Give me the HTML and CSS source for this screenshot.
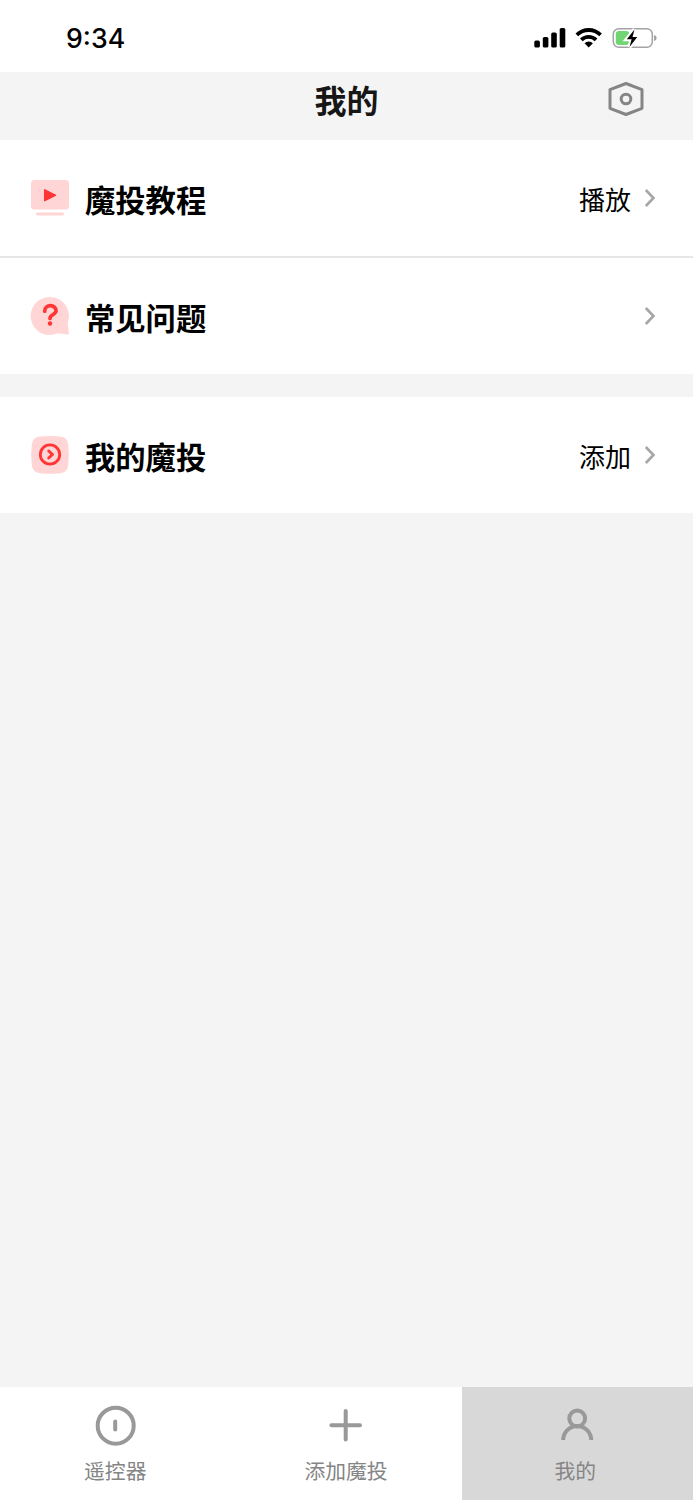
FILE: index.html
```html
<!DOCTYPE html>
<html lang="zh-CN">
<head>
<meta charset="utf-8">
<title>我的</title>
<link rel="stylesheet" href="styles.css">
</head>
<body>
<div class="app">
  <div class="status">
    <span class="time">9:34</span>
    <svg class="status-icons" width="126" height="24" viewBox="0 0 126 24">
      <rect x="0.300" y="14.500" width="5.600" height="7" rx="1.600"/>
      <rect x="8.800" y="11" width="5.600" height="10.500" rx="1.600"/>
      <rect x="17.200" y="6.500" width="5.600" height="15" rx="1.600"/>
      <rect x="25.700" y="2" width="5.600" height="19.500" rx="1.600"/>
      <path d="M41.500 7.400A19 19 0 0 1 67.900 7.400L65.300 10.200A15.300 15.300 0 0 0 44.100 10.200Z"/>
      <path d="M46 12.400A12.500 12.500 0 0 1 63.400 12.400L60.700 15.200A8.800 8.800 0 0 0 48.700 15.200Z"/>
      <path d="M50.500 17.200A6 6 0 0 1 58.900 17.200L54.700 21.500Z"/>
      <rect x="79.300" y="2.700" width="39" height="18.600" rx="5.500" fill="#fff" stroke="#a3a3a3" stroke-width="1.500"/>
      <rect x="81.800" y="5.100" width="13.500" height="13.800" rx="3.200" fill="#70d674"/>
      <path d="M120 9Q122.700 9.700 122.700 12T120 15Z" fill="#a3a3a3"/>
      <path d="M100.500 3.500L92.800 13.200H97.600L95.500 21L103.300 11H98.500Z" stroke="#fff" stroke-width="4"/>
      <path d="M100.500 3.500L92.800 13.200H97.600L95.500 21L103.300 11H98.500Z"/>
    </svg>
  </div>
  <header class="header">
    <h1 class="title">我的</h1>
    <svg class="settings" width="40" height="40" viewBox="0 0 40 40" fill="none" stroke="#858585" stroke-width="3">
      <path d="M20 4.500L36 10.700V29.300L20 35.500L4 29.300V10.700Z" stroke-linejoin="round"/>
      <circle cx="20" cy="20" r="4.800"/>
    </svg>
  </header>
  <main class="content">
    <section class="group">
      <div class="row">
        <svg class="icon" width="40" height="40" viewBox="0 0 40 40">
          <rect x="1" y="2" width="38" height="29.500" rx="3.500" fill="#ffd5d5"/>
          <rect x="6" y="34.500" width="28" height="3" rx="1.500" fill="#ffd5d5"/>
          <path d="M14.500 11.500L26 17.300L14.500 23Z" fill="#ff3434" stroke="#ff3434" stroke-width="1" stroke-linejoin="round"/>
        </svg>
        <span class="label">魔投教程</span>
        <span class="value">播放</span>
        <svg class="chevron" width="14" height="22" viewBox="0 0 14 22"><path d="M2.800 3L10.500 11L2.800 19"/></svg>
      </div>
      <div class="row divided">
        <svg class="icon" width="40" height="40" viewBox="0 0 40 40">
          <path d="M20 1A19 19 0 1 0 27.500 37.300L39 38.500L37.600 27A19 19 0 0 0 20 1Z" fill="#ffd5d5"/>
          <path d="M14.700 15.200C14.700 7.800 26 8 26 14.800C26 18.700 20 18.300 20 22.500" fill="none" stroke="#ff3434" stroke-width="3.700" stroke-linecap="round"/>
          <circle cx="20" cy="27.500" r="2.200" fill="#ff3434"/>
        </svg>
        <span class="label">常见问题</span>
        <svg class="chevron" width="14" height="22" viewBox="0 0 14 22"><path d="M2.800 3L10.500 11L2.800 19"/></svg>
      </div>
    </section>
    <section class="group">
      <div class="row">
        <svg class="icon" width="40" height="40" viewBox="0 0 40 40">
          <path d="M10 1.500Q20 .5 30 1.500Q37.500 2 38.200 9.500Q39.500 20 38.200 30Q37.500 37.500 30 38.200Q20 39.500 10 38.200Q2.500 37.500 1.800 30Q.5 20 1.800 9.500Q2.500 2 10 1.500Z" fill="#ffd5d5"/>
          <circle cx="20" cy="19.500" r="9.700" fill="none" stroke="#ff3434" stroke-width="2.800"/>
          <path d="M18.700 16L22.500 19.500L18.700 23" fill="none" stroke="#ff3434" stroke-width="2.900" stroke-linecap="round" stroke-linejoin="round"/>
        </svg>
        <span class="label">我的魔投</span>
        <span class="value">添加</span>
        <svg class="chevron" width="14" height="22" viewBox="0 0 14 22"><path d="M2.800 3L10.500 11L2.800 19"/></svg>
      </div>
    </section>
  </main>
  <nav class="tabs">
    <div class="tab">
      <svg width="42" height="42" viewBox="0 0 42 42"><circle cx="21.700" cy="20.700" r="18"/><path d="M21.200 16.500V24.500"/></svg>
      <span>遥控器</span>
    </div>
    <div class="tab">
      <svg width="42" height="42" viewBox="0 0 42 42"><path d="M20.700 6V34.500M6.400 20.200H35"/></svg>
      <span>添加魔投</span>
    </div>
    <div class="tab active">
      <svg width="42" height="42" viewBox="0 0 42 42"><circle cx="21.200" cy="13.500" r="7.900"/><path class="shoulders" d="M7.200 35A14 14 0 0 1 35.200 35"/></svg>
      <span>我的</span>
    </div>
  </nav>
</div>
</body>
</html>
```
FILE: styles.css
```css
* { box-sizing: border-box; }
body {
  margin: 0;
  font-family: "Noto Sans CJK SC", sans-serif;
  color: #000;
}
.app {
  display: flex;
  flex-direction: column;
  height: 1500px;
  background: #f4f4f4;
}
.status {
  display: flex;
  justify-content: space-between;
  align-items: center;
  height: 72px;
  padding: 4px 33px 0 66px;
  background: #fff;
}
.time { font: 500 26.700px/36px Inter, sans-serif; }
.header {
  display: grid;
  grid-template-columns: 1fr auto 1fr;
  align-items: start;
  height: 68px;
  padding: 4px 47px 0;
}
.title {
  grid-column: 2;
  margin: 0;
  font-size: 32px;
  line-height: 46px;
  font-weight: 700;
  color: #161616;
}
.settings {
  justify-self: end;
  margin-top: 3px;
}
.content {
  flex: 1;
  display: flex;
  flex-direction: column;
  gap: 23px;
}
.group { background: #fff; }
.row {
  display: flex;
  align-items: center;
  height: 116px;
  padding: 0 36px 0 30px;
}
.divided {
  height: 118px;
  border-top: 2px solid #e6e6e6;
}
.label {
  flex: 1;
  padding: 2px 0 0 15px;
  font-size: 30.300px;
  line-height: 44px;
  font-weight: 700;
}
.value {
  margin-right: 12px;
  padding-top: 1px;
  font-size: 26px;
  line-height: 38px;
}
.chevron {
  fill: none;
  stroke: #a6a6a6;
  stroke-width: 2.600;
}
.tabs {
  display: grid;
  grid-template-columns: 230.500px 231px 1fr;
  height: 113px;
  background: #fff;
}
.tab {
  display: flex;
  flex-direction: column;
  align-items: center;
  padding-top: 18px;
  font-size: 20.800px;
  line-height: 30px;
  color: #858585;
}
.tab svg {
  margin-bottom: 8px;
  fill: none;
  stroke: #999;
  stroke-width: 4;
  stroke-linecap: round;
}
.tab .shoulders { stroke-linecap: butt; }
.active { background: #d8d8d8; }
.active span { margin-right: 4px; }
```
